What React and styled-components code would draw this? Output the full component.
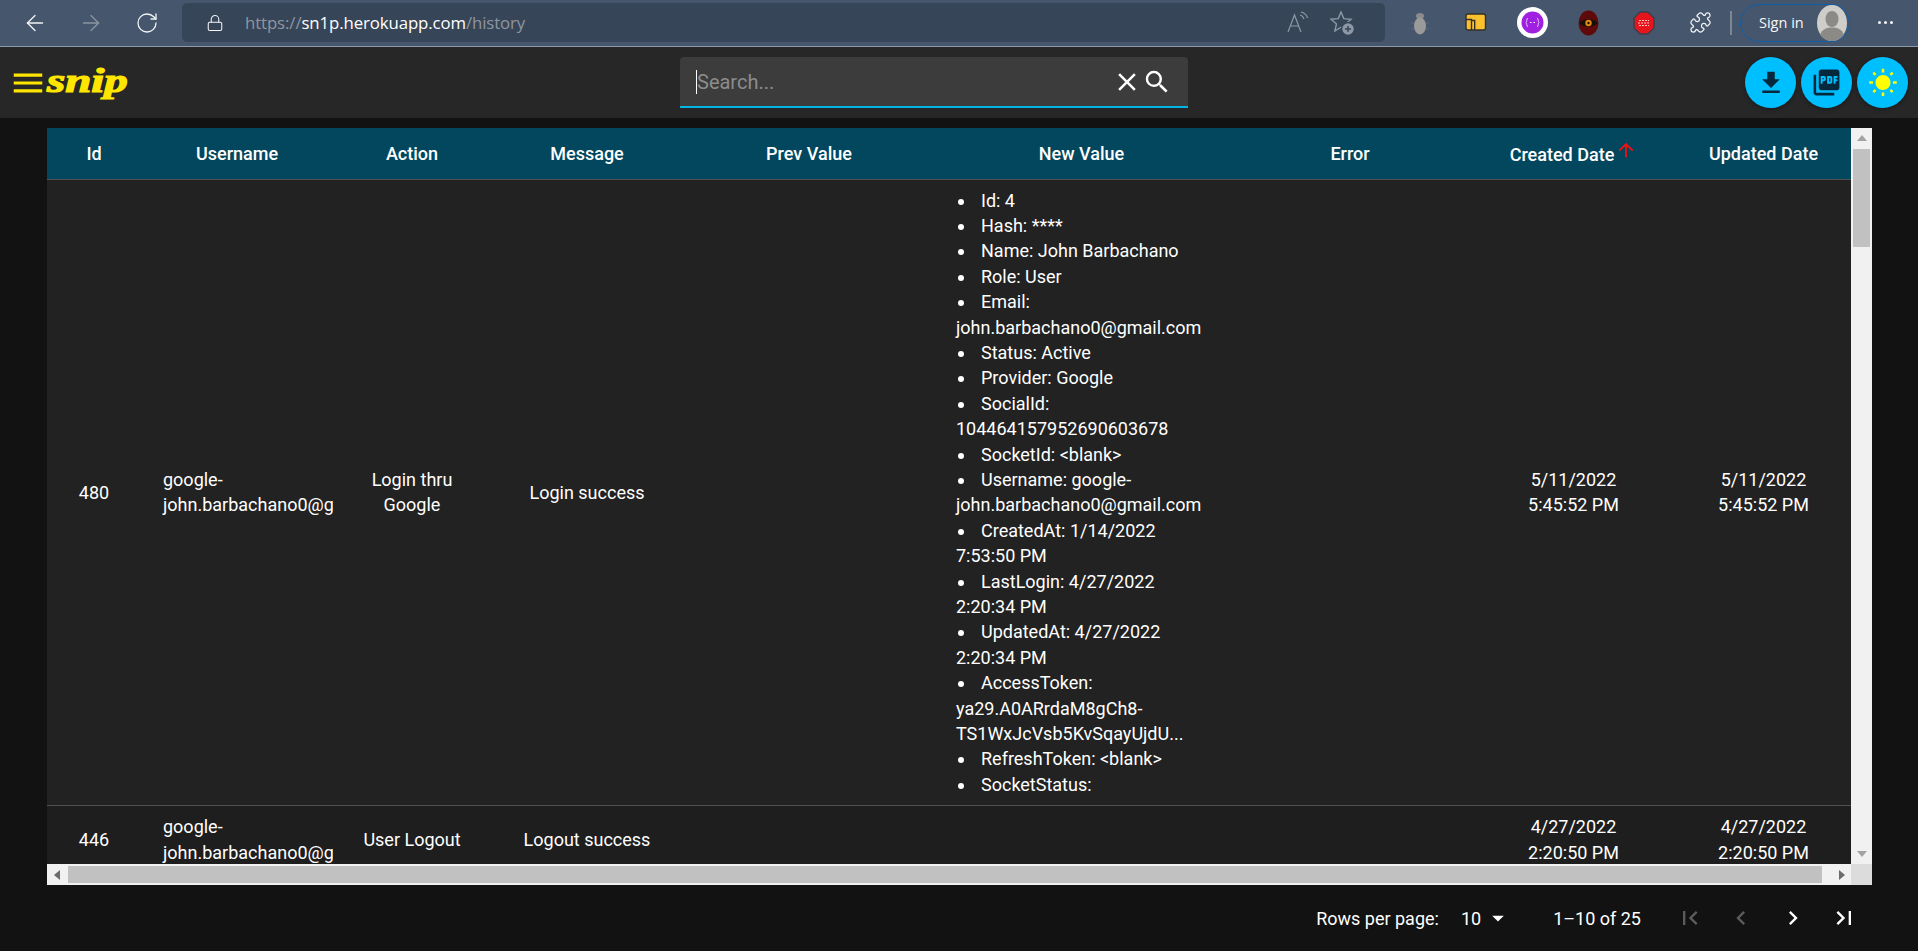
import styled, { createGlobalStyle } from "styled-components";
import { ArrowLeft, ArrowRight, RotateCw, Lock, Puzzle } from "lucide-react";
import {
  MdMenu,
  MdClose,
  MdSearch,
  MdFileDownload,
  MdPictureAsPdf,
  MdWbSunny,
  MdArrowUpward,
  MdArrowDropDown,
  MdFirstPage,
  MdLastPage,
  MdChevronLeft,
  MdChevronRight,
} from "react-icons/md";

const GlobalStyle = createGlobalStyle`
  html, body {
    margin: 0;
    padding: 0;
    height: 100%;
    background: #121212;
    overflow: hidden;
  }
  body {
    font-family: Roboto, "Liberation Sans", sans-serif;
    color: #fff;
  }
`;

const Page = styled.div`
  display: flex;
  flex-direction: column;
  width: 1918px;
  height: 951px;
  background: #121212;
`;

/* browser toolbar */
const BrowserBar = styled.div`
  display: flex;
  align-items: center;
  flex: none;
  box-sizing: border-box;
  height: 47px;
  padding: 0 0 1px 7px;
  background: #46566c;
  border-bottom: 1px solid #8f9bab;
`;

const BarSlot = styled.div`
  display: flex;
  align-items: center;
  justify-content: center;
  flex: none;
  width: 56px;
  height: 38px;
  color: ${(p) => (p.$dim ? "#8b95a3" : "#f2f4f6")};
`;

const AddressBar = styled.div`
  display: flex;
  align-items: center;
  flex: none;
  box-sizing: border-box;
  width: 1203px;
  height: 39px;
  margin: 0 7px;
  padding: 0 20px 0 24px;
  border-radius: 5px;
  background: #374558;
`;

const Url = styled.div`
  flex: 1;
  margin-left: 21px;
  font-family: "Open Sans", sans-serif;
  font-size: 16.8px;
  letter-spacing: -0.1px;
  color: #8e96a1;
  & b {
    font-weight: 400;
    color: #fff;
  }
`;

const AddressIcon = styled.div`
  display: flex;
  align-items: center;
  justify-content: center;
  width: 45px;
  color: #8d97a5;
`;

const Divider = styled.div`
  flex: none;
  width: 2px;
  height: 24px;
  margin: 0 8px 0 2px;
  background: #7c8796;
`;

const SignIn = styled.div`
  display: flex;
  align-items: center;
  flex: none;
  box-sizing: border-box;
  width: 110px;
  height: 38px;
  padding: 0 2px 0 18px;
  border: 1.5px solid #0f5ea8;
  border-radius: 19px;
  font-family: "Open Sans", sans-serif;
  font-size: 14.5px;
  color: #f5f6f7;
  justify-content: space-between;
`;

const Dots = styled.div`
  display: flex;
  gap: 3px;
  margin-left: 28px;
  & i {
    width: 3px;
    height: 3px;
    border-radius: 50%;
    background: #f2f4f6;
  }
`;

/* app header */
const AppBar = styled.header`
  display: grid;
  grid-template-columns: 680px 508px 1fr;
  align-items: center;
  flex: none;
  height: 71px;
  background: #272727;
`;

const Brand = styled.div`
  display: flex;
  align-items: center;
  padding-left: 9px;
  color: #ffe600;
`;

const Logo = styled.span`
  display: inline-block;
  margin-top: -2px;
  font-family: "Liberation Serif", serif;
  font-weight: 700;
  font-style: italic;
  font-size: 33px;
  line-height: 1;
  color: #ffe600;
  -webkit-text-stroke: 1.2px #ffe600;
  transform: scaleX(1.42);
  transform-origin: left center;
`;

const SearchBox = styled.div`
  display: flex;
  align-items: center;
  box-sizing: border-box;
  height: 51px;
  padding: 0 16px;
  border-bottom: 2px solid #00b4e6;
  border-radius: 4px 4px 0 0;
  background: #3c3c3c;
`;

const SearchText = styled.span`
  flex: 1;
  border-left: 1px solid #fff;
  font-size: 20px;
  line-height: 24px;
  color: #8c8c8c;
`;

const SearchIcon = styled.span`
  display: flex;
  color: #fff;
`;

const Actions = styled.div`
  display: flex;
  justify-content: flex-end;
  gap: 5px;
  padding-right: 10px;
`;

const RoundButton = styled.div`
  display: flex;
  align-items: center;
  justify-content: center;
  width: 51px;
  height: 51px;
  border-radius: 50%;
  background: #00bfff;
  color: ${(p) => p.$color || "#06283d"};
  box-shadow: 0 1px 4px rgba(0, 0, 0, 0.4);
`;

/* table */
const Main = styled.main`
  flex: none;
  padding: 10px 46px 0 47px;
`;

const TableFrame = styled.div`
  display: grid;
  grid-template-columns: 1804px 21px;
  grid-template-rows: 736px 21px;
`;

const TableClip = styled.div`
  overflow: hidden;
  background: #1e1e1e;
`;

const Table = styled.table`
  width: 1805px;
  table-layout: fixed;
  border-collapse: collapse;
  font-size: 18px;
  line-height: 25.4px;
`;

const HeadRow = styled.tr`
  height: 51px;
  background: #02475e;
  border-bottom: 1px solid #515151;
`;

const HeadCell = styled.th`
  padding: 0 8px;
  font-weight: 500;
  font-size: 18px;
  text-align: center;
`;

const SortArrow = styled(MdArrowUpward)`
  margin-left: 1px;
  color: #f01010;
`;

const BodyRow = styled.tr`
  background: ${(p) => (p.$alt ? "#1e1e1e" : "#222222")};
  border-bottom: 1px solid #515151;
`;

const Cell = styled.td`
  padding: 8px ${(p) => (p.$clip ? "0" : "21px")} 8px ${(p) => (p.$clip ? "22px" : "21px")};
  overflow: hidden;
  font-weight: 400;
  text-align: ${(p) => (p.$clip || p.$list ? "left" : "center")};
  vertical-align: middle;
`;

const ValueList = styled.ul`
  margin: 0;
  padding: 0;
  list-style: none;
`;

const ValueItem = styled.li`
  &::before {
    content: "";
    display: inline-block;
    width: 6px;
    height: 6px;
    margin: 0 17px 2px 2px;
    border-radius: 50%;
    background: #fff;
  }
`;

const ScrollTrack = styled.div`
  display: flex;
  flex-direction: ${(p) => (p.$horizontal ? "row" : "column")};
  align-items: center;
  background: #f1f1f1;
`;

const ScrollThumb = styled.div`
  flex: none;
  width: ${(p) => (p.$horizontal ? "1754px" : "17px")};
  height: ${(p) => (p.$horizontal ? "17px" : "98px")};
  background: #c1c1c1;
`;

const ScrollEnd = styled.div`
  display: flex;
  align-items: center;
  justify-content: center;
  flex: ${(p) => (p.$grow ? 1 : "none")};
  width: ${(p) => (p.$horizontal ? "21px" : "17px")};
  height: ${(p) => (p.$horizontal ? "17px" : "21px")};
`;

const Corner = styled.div`
  background: #dcdcdc;
`;

/* pagination */
const Pagination = styled.footer`
  display: flex;
  align-items: center;
  justify-content: flex-end;
  height: 66px;
  padding-right: 48px;
  font-size: 18px;
  color: #fff;
`;

const RowsSelect = styled.div`
  display: flex;
  align-items: center;
  gap: 3px;
  margin: 0 41px 0 22px;
`;

const PageRange = styled.span`
  margin-right: 23px;
`;

const PageButton = styled.div`
  display: flex;
  align-items: center;
  justify-content: center;
  width: 51.5px;
  color: ${(p) => (p.$off ? "#5c5c5c" : "#fff")};
`;

const Triangle = ({ dir }) => {
  const points = {
    up: "1,8 11,8 6,2",
    down: "1,3 11,3 6,9",
    left: "8,1 8,11 2,6",
    right: "4,1 4,11 10,6",
  };
  return (
    <svg width="12" height="12" viewBox="0 0 12 12">
      <polygon points={points[dir]} fill={dir === "left" || dir === "right" ? "#6b6b6b" : "#a3a3a3"} />
    </svg>
  );
};

const ReadAloud = () => (
  <svg width="26" height="24" viewBox="0 0 26 24" fill="none" stroke="currentColor" strokeWidth="1.2">
    <path d="M3 21 9.5 4 16 21M5.3 15h8.4" />
    <path d="M15 4c2 .6 3.4 2 4 4M16 1c3.6.8 5.6 3 6.6 6" />
  </svg>
);

const StarPlus = () => (
  <svg width="26" height="26" viewBox="0 0 26 26" fill="none" stroke="currentColor" strokeWidth="1.4">
    <polygon points="11,2 13.8,8.6 21,9.2 15.500,13.900 17.200,21 11,17.200 4.800,21 6.500,13.900 1,9.200 8.200,8.600" />
    <circle cx="18" cy="19" r="6.500" fill="currentColor" stroke="#374558" strokeWidth="1.500" />
    <path d="M18 16v6M15 19h6" stroke="#374558" />
  </svg>
);

const BugIcon = () => (
  <svg width="24" height="26" viewBox="0 0 24 26">
    <ellipse cx="12" cy="6" rx="4" ry="3" fill="#8b8b8b" />
    <ellipse cx="12" cy="16" rx="6" ry="8.500" fill="#9a9a9a" />
    <path d="M3 13h3M18 13h3M3 19h3M18 19h3" stroke="#5d6674" strokeWidth="1" />
  </svg>
);

const FolderIcon = () => (
  <svg width="22" height="20" viewBox="0 0 22 20">
    <rect x="1" y="1" width="19.500" height="16" rx="2" fill="#fbc02d" stroke="#33302a" strokeWidth="1.400" />
    <path d="M1 6.500h5.500v10.500M6.500 17V7.500h3.200V17" fill="none" stroke="#33302a" strokeWidth="1.400" />
  </svg>
);

const PurpleIcon = () => (
  <svg width="31" height="31" viewBox="0 0 31 31">
    <circle cx="15.500" cy="15.500" r="15.500" fill="#fff" />
    <circle cx="15.500" cy="15.500" r="11" fill="#a020e0" />
    <path d="M11 11c-1.500 0-1 4.500-2 4.500 1 0 .5 4.500 2 4.500M20 11c1.500 0 1 4.500 2 4.500-1 0-.5 4.500-2 4.500" fill="none" stroke="#e6c4ff" strokeWidth="1" />
    <path d="M13 15.500h1.500M16.500 15.500H18" stroke="#fff" strokeWidth="1.200" />
  </svg>
);

const EyeIcon = () => (
  <svg width="21" height="26" viewBox="0 0 21 26">
    <ellipse cx="10.500" cy="13" rx="10" ry="12.500" fill="#5e0a0a" />
    <path d="M1.500 13C5 8 16 8 19.500 13 16 18 5 18 1.500 13z" fill="#16100c" />
    <circle cx="10.500" cy="13" r="3.200" fill="#e08a10" />
    <circle cx="10.500" cy="13" r="1.200" fill="#2a0a00" />
  </svg>
);

const StopIcon = () => (
  <svg width="22" height="24" viewBox="0 0 22 24">
    <polygon points="7,1 15,1 21,7 21,17 15,23 7,23 1,17 1,7" fill="#e8141c" stroke="#39404c" strokeWidth="1.500" />
    <path d="M6 9.500h10M5 12h12M6 14.500h10" stroke="#ffc4c4" strokeWidth="1.200" strokeDasharray="2 1" />
  </svg>
);

const Avatar = () => (
  <svg width="30" height="36" viewBox="0 0 30 36">
    <ellipse cx="15" cy="18" rx="15" ry="18" fill="#cfcdc9" />
    <ellipse cx="15" cy="14" rx="6.500" ry="8" fill="#8c8a86" />
    <path d="M3 30c2-6 7-7.500 12-7.500S25 24 27 30c-3 3.500-7 6-12 6S6 33.500 3 30z" fill="#8c8a86" />
  </svg>
);

const columns = [
  { label: "Id", width: 94 },
  { label: "Username", width: 192 },
  { label: "Action", width: 158 },
  { label: "Message", width: 192 },
  { label: "Prev Value", width: 252 },
  { label: "New Value", width: 293 },
  { label: "Error", width: 244 },
  { label: "Created Date", width: 203, sorted: true },
  { label: "Updated Date", width: 177 },
];

const newValue = [
  "Id: 4",
  "Hash: ****",
  "Name: John Barbachano",
  "Role: User",
  "Email: john.barbachano0@gmail.com",
  "Status: Active",
  "Provider: Google",
  "SocialId: 104464157952690603678",
  "SocketId: <blank>",
  "Username: google-john.barbachano0@gmail.com",
  "CreatedAt: 1/14/2022 7:53:50 PM",
  "LastLogin: 4/27/2022 2:20:34 PM",
  "UpdatedAt: 4/27/2022 2:20:34 PM",
  "AccessToken: ya29.A0ARrdaM8gCh8-TS1WxJcVsb5KvSqayUjdU...",
  "RefreshToken: <blank>",
  "SocketStatus:",
];

const rows = [
  {
    id: 480,
    action: "Login thru Google",
    message: "Login success",
    values: newValue,
    date: "5/11/2022",
    time: "5:45:52 PM",
  },
  {
    id: 446,
    action: "User Logout",
    message: "Logout success",
    values: [],
    date: "4/27/2022",
    time: "2:20:50 PM",
  },
];

const BrowserToolbar = () => (
  <BrowserBar>
    <BarSlot><ArrowLeft size={26} strokeWidth={1.2} /></BarSlot>
    <BarSlot $dim><ArrowRight size={26} strokeWidth={1.2} /></BarSlot>
    <BarSlot><RotateCw size={24} strokeWidth={1.3} /></BarSlot>
    <AddressBar>
      <Lock size={18} strokeWidth={1.4} color="#f2f4f6" />
      <Url>https://<b>sn1p.herokuapp.com</b>/history</Url>
      <AddressIcon><ReadAloud /></AddressIcon>
      <AddressIcon><StarPlus /></AddressIcon>
    </AddressBar>
    <BarSlot><BugIcon /></BarSlot>
    <BarSlot><FolderIcon /></BarSlot>
    <BarSlot><PurpleIcon /></BarSlot>
    <BarSlot><EyeIcon /></BarSlot>
    <BarSlot><StopIcon /></BarSlot>
    <BarSlot><Puzzle size={23} strokeWidth={1.3} /></BarSlot>
    <Divider />
    <SignIn>
      Sign in
      <Avatar />
    </SignIn>
    <Dots><i /><i /><i /></Dots>
  </BrowserBar>
);

const Header = () => (
  <AppBar>
    <Brand>
      <MdMenu size={38} />
      <Logo>snip</Logo>
    </Brand>
    <SearchBox>
      <SearchText>Search...</SearchText>
      <SearchIcon><MdClose size={30} /></SearchIcon>
      <SearchIcon><MdSearch size={30} /></SearchIcon>
    </SearchBox>
    <Actions>
      <RoundButton><MdFileDownload size={30} /></RoundButton>
      <RoundButton><MdPictureAsPdf size={31} /></RoundButton>
      <RoundButton $color="#ffff00"><MdWbSunny size={30} /></RoundButton>
    </Actions>
  </AppBar>
);

const HistoryTable = () => (
  <TableFrame>
    <TableClip>
      <Table>
        <colgroup>
          {columns.map((c) => (
            <col key={c.label} width={c.width} />
          ))}
        </colgroup>
        <thead>
          <HeadRow>
            {columns.map((c) => (
              <HeadCell key={c.label}>
                {c.label}
                {c.sorted && <SortArrow size={22} />}
              </HeadCell>
            ))}
          </HeadRow>
        </thead>
        <tbody>
          {rows.map((r, i) => (
            <BodyRow key={r.id} $alt={i % 2 === 1}>
              <Cell>{r.id}</Cell>
              <Cell $clip>google-john.barbachano0@gmail.com</Cell>
              <Cell>{r.action}</Cell>
              <Cell>{r.message}</Cell>
              <Cell />
              <Cell $list>
                {r.values.length > 0 && (
                  <ValueList>
                    {r.values.map((v) => (
                      <ValueItem key={v}>{v}</ValueItem>
                    ))}
                  </ValueList>
                )}
              </Cell>
              <Cell />
              <Cell>{r.date}<br />{r.time}</Cell>
              <Cell>{r.date}<br />{r.time}</Cell>
            </BodyRow>
          ))}
        </tbody>
      </Table>
    </TableClip>
    <ScrollTrack>
      <ScrollEnd><Triangle dir="up" /></ScrollEnd>
      <ScrollThumb />
      <ScrollEnd $grow />
      <ScrollEnd><Triangle dir="down" /></ScrollEnd>
    </ScrollTrack>
    <ScrollTrack $horizontal>
      <ScrollEnd $horizontal><Triangle dir="left" /></ScrollEnd>
      <ScrollThumb $horizontal />
      <ScrollEnd $horizontal $grow />
      <ScrollEnd $horizontal><Triangle dir="right" /></ScrollEnd>
    </ScrollTrack>
    <Corner />
  </TableFrame>
);

const Footer = () => (
  <Pagination>
    <span>Rows per page:</span>
    <RowsSelect>
      10
      <MdArrowDropDown size={28} />
    </RowsSelect>
    <PageRange>1–10 of 25</PageRange>
    <PageButton $off><MdFirstPage size={28} /></PageButton>
    <PageButton $off><MdChevronLeft size={28} /></PageButton>
    <PageButton><MdChevronRight size={28} /></PageButton>
    <PageButton><MdLastPage size={28} /></PageButton>
  </Pagination>
);

export default function App() {
  return (
    <Page>
      <GlobalStyle />
      <BrowserToolbar />
      <Header />
      <Main>
        <HistoryTable />
      </Main>
      <Footer />
    </Page>
  );
}
